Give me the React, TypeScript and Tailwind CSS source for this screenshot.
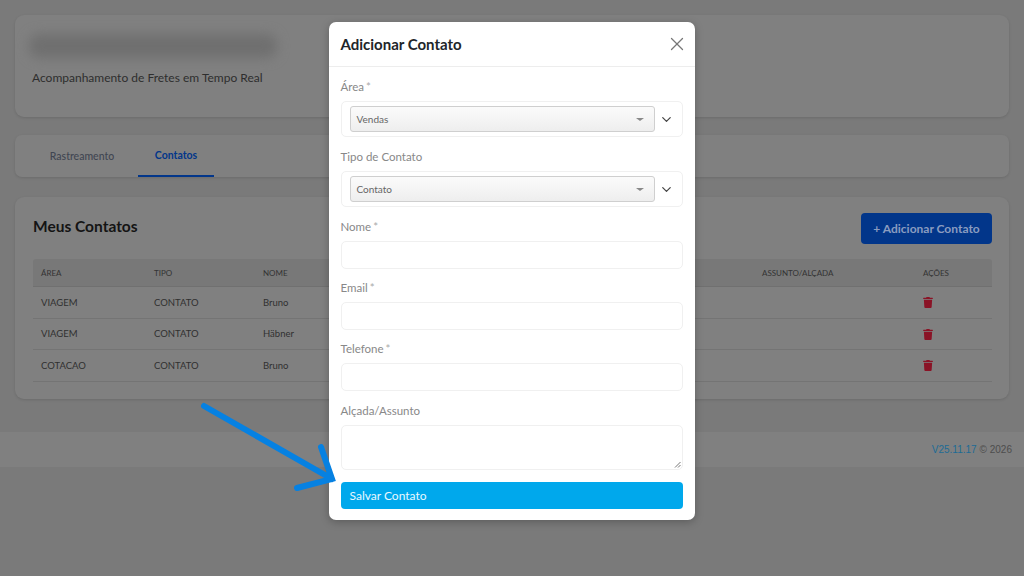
import React from 'react';
import { X, ChevronDown } from 'lucide-react';
import { FaTrash } from 'react-icons/fa';

const rows = [
  { area: 'VIAGEM', tipo: 'CONTATO', nome: 'Bruno' },
  { area: 'VIAGEM', tipo: 'CONTATO', nome: 'Häbner' },
  { area: 'COTACAO', tipo: 'CONTATO', nome: 'Bruno' },
];

const Label: React.FC<{ text: string; req?: boolean }> = ({ text, req }) => (
  <div className="h-[20px] text-[11.5px] leading-[20px] text-[#888]">
    <span>{text}</span>
    {req && <span className="ml-[2px] text-[#aaa]">*</span>}
  </div>
);

const SelectField: React.FC<{ label: string; value: string; req?: boolean }> = ({ label, value, req }) => (
  <div>
    <Label text={label} req={req} />
    <div className="mt-[4px] flex h-[36px] items-center rounded-[5px] border border-[#f0f0f0] pl-[8px] pr-[8px]">
      <div className="flex h-[26px] w-[306px] items-center justify-between rounded-[3px] border border-[#cfcfcf] bg-gradient-to-b from-[#fbfbfb] to-[#eeeeee] pl-[6px] pr-[10px] pt-[1px] text-[10px] text-[#666]">
        <span>{value}</span>
        <span className="h-0 w-0 border-x-[4px] border-t-[3px] border-x-transparent border-t-[#888]" />
      </div>
      <ChevronDown className="ml-[4px] h-[15px] w-[15px] text-[#444]" strokeWidth={2} />
    </div>
  </div>
);

const InputField: React.FC<{ label: string }> = ({ label }) => (
  <div>
    <Label text={label} req />
    <div className="mt-[4px] h-[28px] rounded-[5px] border border-[#f0f0f0] bg-white" />
  </div>
);

export default function App() {
  return (
    <div className="relative h-[576px] w-[1024px] overflow-hidden bg-[#7a7a7a] font-['Lato','Open_Sans',sans-serif]">
      <div className="px-[15px] pt-[15px]">
        <div className="h-[102px] rounded-[9px] bg-[#808080] px-[17px] pt-[19px] shadow-[0_1px_3px_rgba(0,0,0,0.12)]">
          <div className="ml-[-3px] h-[24px] w-[248px] rounded-[10px] bg-[#6f6f6f] blur-[6px]" />
          <div className="mt-[11px] text-[12px] leading-[18px] text-[#2e2e2e]">Acompanhamento de Fretes em Tempo Real</div>
        </div>

        <div className="mt-[18px] flex h-[42px] rounded-[7px] bg-[#808080] pl-[18px] shadow-[0_1px_3px_rgba(0,0,0,0.12)]">
          <div className="flex w-[105px] items-center justify-center pr-[7px] pt-[2px] text-[10.5px] font-medium text-[#404652]">Rastreamento</div>
          <div className="flex w-[76px] items-center justify-center border-b-[2px] border-[#02368a] pt-[2px] text-[10.5px] font-bold text-[#02368a]">Contatos</div>
        </div>

        <div className="mt-[20px] h-[202px] rounded-[9px] bg-[#808080] pl-[18px] pr-[17px] pt-[13px] shadow-[0_1px_3px_rgba(0,0,0,0.12)]">
          <div className="flex h-[36px] items-start justify-between">
            <div className="mt-[4px] text-[15.5px] font-bold leading-[24px] text-[#141414]">Meus Contatos</div>
            <button className="mt-[3px] h-[31px] w-[131px] rounded-[4px] bg-[#02368a] text-[12px] font-bold text-[#8a9cc0]">+ Adicionar Contato</button>
          </div>
          <div className="mt-[13px] grid h-[28px] grid-cols-[112px_110px_1fr_161px_69px] items-center rounded-t-[3px] border-b border-[#707070] bg-[#787878] pl-[8px] text-[8px] text-[#333]">
            <span>ÁREA</span>
            <span className="pl-[1px]">TIPO</span>
            <span>NOME</span>
            <span>ASSUNTO/ALÇADA</span>
            <span>AÇÕES</span>
          </div>
          {rows.map((r, i) => (
            <div key={i} className="grid h-[31.5px] grid-cols-[112px_110px_1fr_161px_69px] items-center border-b border-[#747474] pl-[8px] pt-[1px] text-[9.5px] text-[#303030]">
              <span>{r.area}</span>
              <span className="pl-[1px]">{r.tipo}</span>
              <span>{r.nome}</span>
              <span />
              <FaTrash className="h-[11px] w-[10px] text-[#8a1326]" />
            </div>
          ))}
        </div>
      </div>

      <div className="mt-[33px] flex h-[35px] items-center justify-end bg-[#808080] pr-[12px] font-['Liberation_Sans',sans-serif] text-[10px] text-[#4d4d4d]">
        <span className="text-[#1d6b95]">V25.11.17</span>
        <span className="ml-[3px]">© 2026</span>
      </div>

      {/* modal over the dimmed page */}
      <div className="absolute inset-0 flex justify-center pt-[22px]">
        <div className="ml-[-1px] h-[498px] w-[366px] rounded-[7px] bg-white shadow-[0_2px_8px_rgba(0,0,0,0.25)]">
          <div className="flex h-[45px] items-center justify-between border-b border-[#ededed] pl-[12px] pr-[7px]">
            <span className="mt-[1px] text-[15px] font-bold text-[#212529]">Adicionar Contato</span>
            <X className="h-[22px] w-[22px] text-[#777]" strokeWidth={1.4} />
          </div>
          <div className="pl-[12px] pr-[12px] pt-[10px]">
            <div className="flex flex-col gap-[10px]">
              <SelectField label="Área" value="Vendas" req />
              <SelectField label="Tipo de Contato" value="Contato" />
            </div>
            <div className="mt-[10px] flex flex-col gap-[9px]">
              <InputField label="Nome" />
              <InputField label="Email" />
              <InputField label="Telefone" />
              <div>
                <div className="mt-[1px]">
                  <Label text="Alçada/Assunto" />
                </div>
                <div className="relative mt-[4px] h-[45px] rounded-[5px] border border-[#f0f0f0] bg-white">
                  <svg className="absolute bottom-[1px] right-[1px]" width="7" height="7" viewBox="0 0 7 7">
                    <path d="M1 6.5L6.5 1M4 6.5L6.5 4" stroke="#666" strokeWidth="0.9" fill="none" />
                  </svg>
                </div>
              </div>
            </div>
            <button className="mt-[12px] flex h-[27px] w-full items-center rounded-[4px] bg-[#00a8ec] pl-[9px] text-[12px] text-[#e8f8ff]">Salvar Contato</button>
          </div>
        </div>
      </div>

      {/* annotation arrow */}
      <svg className="absolute left-0 top-0" width="1024" height="576" viewBox="0 0 1024 576" fill="none">
        <path d="M204 406L332 479M321 447L332 479L297 488" stroke="#0681e2" strokeWidth="6" strokeLinecap="round" strokeLinejoin="miter" />
      </svg>
    </div>
  );
}
